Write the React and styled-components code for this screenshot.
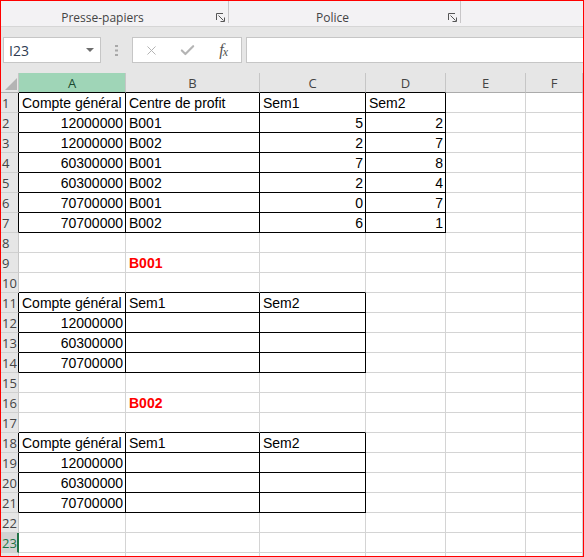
import React from 'react';
import styled, { createGlobalStyle } from 'styled-components';
import { X, Check } from 'lucide-react';

const Global = createGlobalStyle`
  html, body {
    margin: 0;
    padding: 0;
    background: #fff;
    overflow: hidden;
  }
  * { box-sizing: border-box; }
`;

// cells with a thin black border (A1:D7, A11:C14, A18:C21)
const boxes = [
  [1, 7, 1, 4],
  [11, 14, 1, 3],
  [18, 21, 1, 3],
];
const inBox = (r, c) => boxes.some(([r1, r2, c1, c2]) => r >= r1 && r <= r2 && c >= c1 && c <= c2);

const data = {
  1: ['Compte général', 'Centre de profit', 'Sem1', 'Sem2'],
  2: [12000000, 'B001', 5, 2],
  3: [12000000, 'B002', 2, 7],
  4: [60300000, 'B001', 7, 8],
  5: [60300000, 'B002', 2, 4],
  6: [70700000, 'B001', 0, 7],
  7: [70700000, 'B002', 6, 1],
  9: [null, { t: 'B001', red: true }],
  11: ['Compte général', 'Sem1', 'Sem2'],
  12: [12000000],
  13: [60300000],
  14: [70700000],
  16: [null, { t: 'B002', red: true }],
  18: ['Compte général', 'Sem1', 'Sem2'],
  19: [12000000],
  20: [60300000],
  21: [70700000],
};

const COLS = ['A', 'B', 'C', 'D', 'E', 'F'];
const ROWS = 24;
const VISIBLE_ROWS = 23; // row 24 only peeks in by a couple of pixels

const Frame = styled.div`
  width: 584px;
  height: 557px;
  border: 1px solid #ff0000;
  display: flex;
  flex-direction: column;
  overflow: hidden;
  background: #e6e6e6;
  font-family: "Liberation Sans", Arial, sans-serif;
`;

const Ribbon = styled.div`
  height: 26px;
  flex-shrink: 0;
  display: flex;
  align-items: flex-end;
  background: #f3f2f4;
  border-bottom: 1px solid #d6d6d6;
`;

const Group = styled.div`
  width: ${p => p.$w}px;
  height: 25px;
  display: flex;
  align-items: flex-end;
`;

const GroupLabel = styled.div`
  flex: 1;
  text-align: center;
  font-family: "Open Sans", "Noto Sans", sans-serif;
  font-size: 12px;
  line-height: 14px;
  color: #444;
  padding-bottom: 1px;
`;

const Launcher = styled.div`
  width: 24px;
  height: 25px;
  display: flex;
  align-items: flex-end;
  justify-content: flex-end;
  padding: 0 3px 4px 0;
`;

const Separator = styled.div`
  width: 1px;
  height: 22px;
  margin-bottom: 3px;
  background: #c8c6c8;
`;

const FormulaArea = styled.div`
  flex-shrink: 0;
  height: 46px;
  padding: 10px 0 10px 2px;
  display: flex;
  align-items: stretch;
  background: #e6e6e6;
`;

const NameBox = styled.div`
  width: 98px;
  display: flex;
  align-items: center;
  justify-content: space-between;
  padding: 0 6px 0 5px;
  background: #fff;
  border: 1px solid #c6c6c6;
  font-family: "Open Sans", "Noto Sans", sans-serif;
  font-size: 14px;
  color: #2f3d52;
`;

const Caret = styled.span`
  width: 0;
  height: 0;
  border-left: 4px solid transparent;
  border-right: 4px solid transparent;
  border-top: 4px solid #6d6d6d;
`;

const Grip = styled.div`
  width: 31px;
  display: flex;
  align-items: center;
  justify-content: center;
`;

const Actions = styled.div`
  width: 110px;
  display: flex;
  padding-left: 1px;
  background: #fff;
  border: 1px solid #c6c6c6;
`;

const ActionSlot = styled.div`
  width: 36px;
  display: flex;
  align-items: center;
  justify-content: center;
  color: ${p => (p.$active ? '#555' : '#b4b4b4')};
`;

const Fx = styled.span`
  font-family: "Liberation Serif", "DejaVu Serif", serif;
  font-style: italic;
  font-size: 16px;
  color: #555;
  letter-spacing: -1px;
  sub {
    font-size: 12px;
    vertical-align: -1px;
  }
`;

const FormulaInput = styled.div`
  flex: 1;
  margin-left: 4px;
  background: #fff;
  border: 1px solid #c6c6c6;
  border-right: none;
`;

const Sheet = styled.div`
  flex: 1;
  overflow: hidden;
  display: grid;
  grid-template-columns: 18px 107px 134px 106px 80px 80px 1fr;
  grid-auto-rows: 20px;
  background: #fff;
`;

const Corner = styled.div`
  background: #e6e6e6;
  border-right: 1px solid #c6c6c6;
  border-bottom: 1px solid #ababab;
  display: flex;
  align-items: flex-end;
  justify-content: flex-end;
  padding: 0 1px 2px 0;
`;

const ColHead = styled.div`
  background: ${p => (p.$sel ? '#9fd5b7' : '#e6e6e6')};
  border-right: 1px solid #c6c6c6;
  border-bottom: 1px solid ${p => (p.$dark ? '#000' : '#ababab')};
  text-align: center;
  font-family: "Open Sans", "Noto Sans", sans-serif;
  font-size: 13px;
  line-height: 20px;
  color: ${p => (p.$sel ? '#1a4a30' : '#444')};
`;

const RowHead = styled.div`
  background: ${p => (p.$sel ? '#d2d2d2' : '#e6e6e6')};
  border-right: ${p => (p.$sel ? '2px solid #217346' : `1px solid ${p.$dark ? '#000' : '#c6c6c6'}`)};
  border-bottom: 1px solid #d0d0d0;
  padding-left: 1px;
  overflow: hidden;
  white-space: nowrap;
  font-family: "Open Sans", "Noto Sans", sans-serif;
  font-size: 13px;
  line-height: 20px;
  color: ${p => (p.$sel ? '#217346' : '#444')};
`;

const Cell = styled.div`
  border-right: 1px solid ${p => (p.$r ? '#000' : '#d4d4d4')};
  border-bottom: 1px solid ${p => (p.$b ? '#000' : '#d4d4d4')};
  padding: 0 2px 0 3px;
  overflow: hidden;
  white-space: nowrap;
  font-size: 14px;
  line-height: 20px;
  text-align: ${p => (p.$num ? 'right' : 'left')};
  color: ${p => (p.$red ? '#ff0000' : '#000')};
  font-weight: ${p => (p.$red ? 700 : 400)};
`;

const LauncherIcon = () => (
  <svg width="9" height="9" viewBox="0 0 9 9" fill="none" stroke="#555" strokeWidth="1">
    <path d="M0.5 7V0.5H7" />
    <path d="M2.5 2.5L7.5 7.5" />
    <path d="M8.5 4.5V8.5H4.5" />
  </svg>
);

const GripIcon = () => (
  <svg width="3" height="11" viewBox="0 0 3 11" fill="#a8a8a8">
    <rect x="0" y="0" width="3" height="2" />
    <rect x="0" y="4.5" width="3" height="2" />
    <rect x="0" y="9" width="3" height="2" />
  </svg>
);

const CornerIcon = () => (
  <svg width="12" height="12" viewBox="0 0 12 12">
    <polygon points="12,0 12,12 0,12" fill="#b4b4b4" />
  </svg>
);

const RibbonGroup = ({ w, label }) => (
  <>
    <Group $w={w}>
      <GroupLabel>{label}</GroupLabel>
      <Launcher><LauncherIcon /></Launcher>
    </Group>
    <Separator />
  </>
);

const renderRow = r => {
  const vals = data[r] || [];
  const cells = [
    <RowHead key={`h${r}`} $sel={r === 23} $dark={inBox(r, 1)}>
      {r <= VISIBLE_ROWS ? r : ''}
    </RowHead>,
  ];
  COLS.forEach((_, i) => {
    const c = i + 1;
    const v = vals[i];
    const obj = v && typeof v === 'object' ? v : null;
    cells.push(
      <Cell
        key={`${r}-${c}`}
        $r={inBox(r, c) || inBox(r, c + 1)}
        $b={inBox(r, c) || inBox(r + 1, c)}
        $num={typeof v === 'number'}
        $red={obj && obj.red}
      >
        {obj ? obj.t : v}
      </Cell>
    );
  });
  return cells;
};

export default function App() {
  return (
    <>
      <Global />
      <Frame>
        <Ribbon>
          <RibbonGroup w={227} label="Presse-papiers" />
          <RibbonGroup w={231} label="Police" />
        </Ribbon>
        <FormulaArea>
          <NameBox>
            I23
            <Caret />
          </NameBox>
          <Grip><GripIcon /></Grip>
          <Actions>
            <ActionSlot><X size={15} strokeWidth={1.6} /></ActionSlot>
            <ActionSlot><Check size={17} strokeWidth={3} /></ActionSlot>
            <ActionSlot $active><Fx>f<sub>x</sub></Fx></ActionSlot>
          </Actions>
          <FormulaInput />
        </FormulaArea>
        <Sheet>
          <Corner><CornerIcon /></Corner>
          {COLS.map((l, i) => (
            <ColHead key={l} $sel={l === 'A'} $dark={inBox(1, i + 1)}>{l}</ColHead>
          ))}
          {Array.from({ length: ROWS }, (_, i) => renderRow(i + 1))}
        </Sheet>
      </Frame>
    </>
  );
}
